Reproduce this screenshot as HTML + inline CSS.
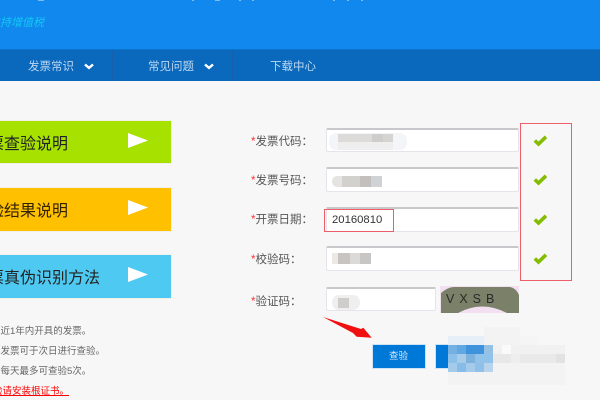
<!DOCTYPE html>
<html><head><meta charset="utf-8"><style>
*{box-sizing:border-box;margin:0;padding:0}
html,body{width:600px;height:400px;overflow:hidden;background:#f7f7f7;font-family:"Liberation Sans","Noto Sans CJK SC",sans-serif}
#w{position:absolute;left:0;top:0;width:600px;height:400px;filter:blur(.35px)}
.a{position:absolute}
.t{position:absolute;white-space:nowrap}
.box{position:absolute;left:-4px;width:176px;border:1px solid #f0f0e8}
.bt{position:absolute;font-size:16px;line-height:20px;color:#222;white-space:nowrap}
.nav{position:absolute;top:59px;font-size:11.5px;line-height:16px;color:#bcd9f2;white-space:nowrap}
.sep{position:absolute;top:51px;width:1px;height:30px;background:#1a5fa8}
.lab{position:absolute;left:251px;font-size:11.5px;line-height:16px;color:#555;white-space:nowrap}
.lab b{color:#f33;font-weight:normal}
.inp{position:absolute;left:326px;width:193px;background:#fff;border:1px solid #e4e4ea;border-top:2px solid #c8c8cc;border-radius:2px}
.note{position:absolute;font-size:9.5px;line-height:14px;color:#666;white-space:nowrap}
.m{position:absolute}
.tk{position:absolute;top:0;height:1px;background:#7dbbf3}
</style></head><body><div id="w">
<div class="a" style="left:-4px;top:-4px;width:608px;height:54px;background:#1188ee"></div>
<div class="tk" style="left:38px;width:6px"></div>
<div class="tk" style="left:192px;width:2px"></div>
<div class="tk" style="left:215px;width:5px"></div>
<div class="tk" style="left:239px;width:2px"></div>
<div class="tk" style="left:252px;width:2px"></div>
<div class="tk" style="left:333px;width:2px"></div>
<div class="tk" style="left:347px;width:2px"></div>
<div class="tk" style="left:361px;width:2px"></div>
<div class="t" style="left:-11px;top:16px;font-size:11px;line-height:14px;font-style:italic;color:#12c8f4">支持增值税</div>
<div class="a" style="left:-4px;top:49px;width:608px;height:32px;background:#0a68bd;border-top:1px solid #0c72cc"></div>
<div class="nav" style="left:28px">发票常识</div>
<svg class="a" style="left:84px;top:62px" width="10" height="8" viewBox="0 0 10 8"><path d="M1 2.500l4 3.400L9 2.500" fill="none" stroke="#fff" stroke-width="2.400"/></svg>
<div class="sep" style="left:112px"></div>
<div class="nav" style="left:148px">常见问题</div>
<svg class="a" style="left:204px;top:62px" width="10" height="8" viewBox="0 0 10 8"><path d="M1 2.500l4 3.400L9 2.500" fill="none" stroke="#fff" stroke-width="2.400"/></svg>
<div class="sep" style="left:232px"></div>
<div class="nav" style="left:270px">下载中心</div>

<div class="box" style="top:120px;height:44px;background:#a6e100"></div>
<div class="bt" style="left:-12px;top:135px">票查验说明</div>
<svg class="a" style="left:128px;top:133px" width="20" height="16"><path d="M0 0L20 7.500L0 15z" fill="#fff"/></svg>
<div class="box" style="top:187px;height:45px;background:#ffc000"></div>
<div class="bt" style="left:-12px;top:202px;color:#332200">验结果说明</div>
<svg class="a" style="left:128px;top:200px" width="20" height="16"><path d="M0 0L20 7.500L0 15z" fill="#fff"/></svg>
<div class="box" style="top:254px;height:45px;background:#4dc9f2"></div>
<div class="bt" style="left:-12px;top:269px">票真伪识别方法</div>
<svg class="a" style="left:128px;top:267px" width="20" height="16"><path d="M0 0L20 7.500L0 15z" fill="#fff"/></svg>

<div class="note" style="left:-9px;top:325px">最近1年内开具的发票。</div>
<div class="note" style="left:-9px;top:345px">具发票可于次日进行查验。</div>
<div class="note" style="left:-9px;top:365px">票每天最多可查验5次。</div>
<div class="note" style="left:-7px;top:385px;color:#f00;text-decoration:underline">验请安装根证书。</div>

<div class="lab" style="top:134px"><b>*</b>发票代码：</div>
<div class="inp" style="top:128px;height:24px"></div>
<div class="m" style="left:329px;top:133px;width:78px;height:17px;background:#f4f5f8;border-radius:7px"></div>
<div class="m" style="left:338px;top:134px;width:34px;height:8px;background:#dddbd9"></div>
<div class="m" style="left:372px;top:134px;width:11px;height:8px;background:#cfcdcc"></div>
<div class="m" style="left:383px;top:134px;width:10px;height:8px;background:#d6d4d2"></div>
<div class="m" style="left:338px;top:142px;width:55px;height:8px;background:#efeeee"></div>

<div class="lab" style="top:173px"><b>*</b>发票号码：</div>
<div class="inp" style="top:167px;height:25px"></div>
<div class="m" style="left:332px;top:176px;width:10px;height:11px;background:#e6e4e2;border-radius:5px 0 0 5px"></div>
<div class="m" style="left:342px;top:176px;width:18px;height:11px;background:#d3d1ce"></div>
<div class="m" style="left:360px;top:176px;width:11px;height:11px;background:#c2bfbc"></div>
<div class="m" style="left:371px;top:176px;width:11px;height:11px;background:#d0d3d6"></div>

<div class="lab" style="top:212px"><b>*</b>开票日期：</div>
<div class="inp" style="top:207px;height:25px"></div>
<div class="a" style="left:324px;top:209px;width:70px;height:23px;border:1px solid #ea5f69"></div>
<div class="t" style="left:332px;top:212px;font-size:11.3px;line-height:16px;color:#333">20160810</div>

<div class="lab" style="top:252px"><b>*</b>校验码：</div>
<div class="inp" style="top:246px;height:25px"></div>
<div class="m" style="left:332px;top:253px;width:6px;height:11px;background:#ece8e4"></div>
<div class="m" style="left:338px;top:253px;width:12px;height:11px;background:#c8c4c2"></div>
<div class="m" style="left:350px;top:253px;width:10px;height:11px;background:#dcdad8"></div>
<div class="m" style="left:360px;top:253px;width:11px;height:11px;background:#c8c6c4"></div>

<div class="a" style="left:520px;top:123px;width:52px;height:158px;border:1px solid #ea5f69"></div>
<svg class="a" style="left:533px;top:134px" width="15" height="13"><path d="M1.800 6.500L5.500 10L13 2.800" fill="none" stroke="#84bd00" stroke-width="3.600"/></svg>
<svg class="a" style="left:533px;top:173px" width="15" height="13"><path d="M1.800 6.500L5.500 10L13 2.800" fill="none" stroke="#84bd00" stroke-width="3.600"/></svg>
<svg class="a" style="left:533px;top:213px" width="15" height="13"><path d="M1.800 6.500L5.500 10L13 2.800" fill="none" stroke="#84bd00" stroke-width="3.600"/></svg>
<svg class="a" style="left:533px;top:252px" width="15" height="13"><path d="M1.800 6.500L5.500 10L13 2.800" fill="none" stroke="#84bd00" stroke-width="3.600"/></svg>

<div class="lab" style="top:294px"><b>*</b>验证码：</div>
<div class="a" style="left:326px;top:287px;width:110px;height:24px;background:#fff;border:1px solid #e4e4ea;border-top:2px solid #c8c8cc;border-radius:2px"></div>
<div class="m" style="left:332px;top:295px;width:28px;height:15px;background:#f0efef;border-radius:7px"></div>
<div class="m" style="left:338px;top:298px;width:11px;height:10px;background:#cfcdcb"></div>

<div class="a" style="left:440px;top:286px;width:79px;height:27px;background:#f3dff2;overflow:hidden">
<svg width="79" height="27" style="position:absolute;left:0;top:0"><path d="M1 7Q8 1 14 1H70Q76 2 79 9V27H67Q42 14 18 27H1z" fill="#7b8168"/></svg>
<div class="t" style="left:6px;top:5px;font-size:12.500px;line-height:16px;letter-spacing:5px;color:#2a2a2a">VXSB</div>
</div>

<svg class="a" style="left:320px;top:315px" width="56" height="28"><path d="M3 2L41 14L43.300 12.700L51.700 22.700L36.700 21.700L33 18z" fill="#f01010"/></svg>

<div class="a" style="left:372px;top:344px;width:54px;height:25px;background:#0078d7;border:1px solid #cfe3f5"></div>
<div class="t" style="left:389px;top:349px;font-size:9.500px;line-height:15px;color:#d6eafa">查验</div>
<div class="a" style="left:435px;top:344px;width:30px;height:25px;background:#0078d7;border:1px solid #cfe3f5"></div>

<div class="m" style="left:448px;top:336px;width:45px;height:9px;background:#e6eff8"></div>
<div class="m" style="left:484px;top:327px;width:36px;height:18px;background:#f3f3f3"></div>
<div class="m" style="left:520px;top:336px;width:18px;height:9px;background:#f5f5f5"></div>
<div class="m" style="left:448px;top:345px;width:9px;height:9px;background:#74b1e2"></div>
<div class="m" style="left:457px;top:345px;width:9px;height:9px;background:#60a8e4"></div>
<div class="m" style="left:466px;top:345px;width:18px;height:9px;background:#3e93dc"></div>
<div class="m" style="left:484px;top:345px;width:9px;height:9px;background:#96c1e4"></div>
<div class="m" style="left:448px;top:354px;width:9px;height:9px;background:#8ac0ea"></div>
<div class="m" style="left:457px;top:354px;width:9px;height:9px;background:#a8cbe8"></div>
<div class="m" style="left:466px;top:354px;width:9px;height:9px;background:#7cb2dc"></div>
<div class="m" style="left:475px;top:354px;width:18px;height:9px;background:#90c2ea"></div>
<div class="m" style="left:448px;top:363px;width:9px;height:9px;background:#a4cbea"></div>
<div class="m" style="left:457px;top:363px;width:9px;height:9px;background:#88bce8"></div>
<div class="m" style="left:466px;top:363px;width:9px;height:9px;background:#a4caec"></div>
<div class="m" style="left:475px;top:363px;width:9px;height:9px;background:#90c0e8"></div>
<div class="m" style="left:484px;top:363px;width:9px;height:9px;background:#b8d3ec"></div>
<div class="m" style="left:493px;top:345px;width:72px;height:9px;background:#f1f1f1"></div>
<div class="m" style="left:502px;top:345px;width:9px;height:9px;background:#fafafa"></div>
<div class="m" style="left:493px;top:354px;width:18px;height:9px;background:#e8e8e8"></div>
<div class="m" style="left:511px;top:354px;width:54px;height:9px;background:#eeeeee"></div>
<div class="m" style="left:520px;top:354px;width:36px;height:9px;background:#e9e9e9"></div>
<div class="m" style="left:556px;top:354px;width:9px;height:9px;background:#e2e2e2"></div>
<div class="m" style="left:493px;top:363px;width:72px;height:9px;background:#f3f3f3"></div>
<div class="m" style="left:448px;top:372px;width:117px;height:13px;background:#f3f3f3"></div>
</div></body></html>
